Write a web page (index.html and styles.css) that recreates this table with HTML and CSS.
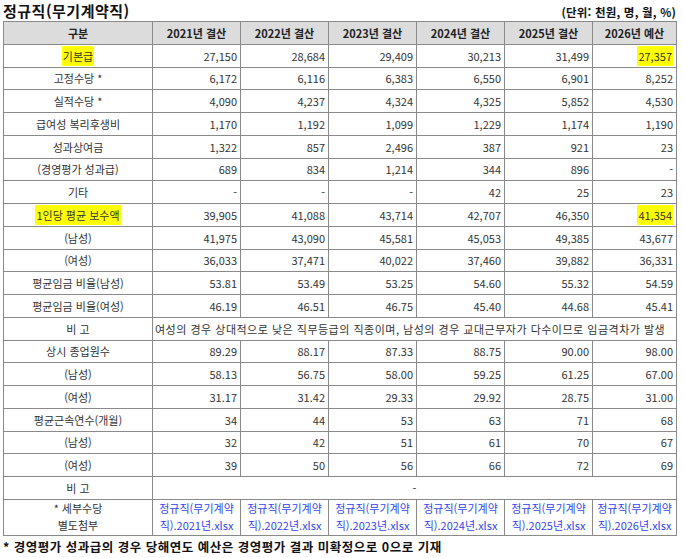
FILE: index.html
```html
<!DOCTYPE html>
<html lang="ko">
<head>
<meta charset="utf-8">
<title>정규직(무기계약직)</title>
<link rel="stylesheet" href="styles.css">
</head>
<body>
<div class="page">
  <div class="top">
    <h1 class="title">정규직(무기계약직)</h1>
    <div class="unit">(단위: 천원, 명, 월, %)</div>
  </div>
  <table class="grid">
    <colgroup>
      <col class="c-label"><col class="c-y"><col class="c-y"><col class="c-y"><col class="c-y"><col class="c-y"><col class="c-last">
    </colgroup>
    <thead>
      <tr><th>구분</th><th>2021년 결산</th><th>2022년 결산</th><th>2023년 결산</th><th>2024년 결산</th><th>2025년 결산</th><th>2026년 예산</th></tr>
    </thead>
    <tbody>
      <tr><td class="lbl"><span class="hl">기본급</span></td><td>27,150</td><td>28,684</td><td>29,409</td><td>30,213</td><td>31,499</td><td><span class="hl">27,357</span></td></tr>
      <tr><td class="lbl">고정수당 *</td><td>6,172</td><td>6,116</td><td>6,383</td><td>6,550</td><td>6,901</td><td>8,252</td></tr>
      <tr><td class="lbl">실적수당 *</td><td>4,090</td><td>4,237</td><td>4,324</td><td>4,325</td><td>5,852</td><td>4,530</td></tr>
      <tr><td class="lbl">급여성 복리후생비</td><td>1,170</td><td>1,192</td><td>1,099</td><td>1,229</td><td>1,174</td><td>1,190</td></tr>
      <tr><td class="lbl">성과상여금</td><td>1,322</td><td>857</td><td>2,496</td><td>387</td><td>921</td><td>23</td></tr>
      <tr><td class="lbl">(경영평가 성과급)</td><td>689</td><td>834</td><td>1,214</td><td>344</td><td>896</td><td>-</td></tr>
      <tr><td class="lbl">기타</td><td>-</td><td>-</td><td>-</td><td>42</td><td>25</td><td>23</td></tr>
      <tr><td class="lbl"><span class="hl">1인당 평균 보수액</span></td><td>39,905</td><td>41,088</td><td>43,714</td><td>42,707</td><td>46,350</td><td><span class="hl">41,354</span></td></tr>
      <tr><td class="lbl">(남성)</td><td>41,975</td><td>43,090</td><td>45,581</td><td>45,053</td><td>49,385</td><td>43,677</td></tr>
      <tr><td class="lbl">(여성)</td><td>36,033</td><td>37,471</td><td>40,022</td><td>37,460</td><td>39,882</td><td>36,331</td></tr>
      <tr><td class="lbl">평균임금 비율(남성)</td><td>53.81</td><td>53.49</td><td>53.25</td><td>54.60</td><td>55.32</td><td>54.59</td></tr>
      <tr><td class="lbl">평균임금 비율(여성)</td><td>46.19</td><td>46.51</td><td>46.75</td><td>45.40</td><td>44.68</td><td>45.41</td></tr>
      <tr><td class="lbl">비 고</td><td class="note" colspan="6">여성의 경우 상대적으로 낮은 직무등급의 직종이며, 남성의 경우 교대근무자가 다수이므로 임금격차가 발생</td></tr>
      <tr><td class="lbl">상시 종업원수</td><td>89.29</td><td>88.17</td><td>87.33</td><td>88.75</td><td>90.00</td><td>98.00</td></tr>
      <tr><td class="lbl">(남성)</td><td>58.13</td><td>56.75</td><td>58.00</td><td>59.25</td><td>61.25</td><td>67.00</td></tr>
      <tr><td class="lbl">(여성)</td><td>31.17</td><td>31.42</td><td>29.33</td><td>29.92</td><td>28.75</td><td>31.00</td></tr>
      <tr><td class="lbl">평균근속연수(개월)</td><td>34</td><td>44</td><td>53</td><td>63</td><td>71</td><td>68</td></tr>
      <tr><td class="lbl">(남성)</td><td>32</td><td>42</td><td>51</td><td>61</td><td>70</td><td>67</td></tr>
      <tr><td class="lbl">(여성)</td><td>39</td><td>50</td><td>56</td><td>66</td><td>72</td><td>69</td></tr>
      <tr><td class="lbl">비 고</td><td class="center" colspan="6">-</td></tr>
      <tr class="files"><td class="lbl">* 세부수당<br>별도첨부</td>
        <td class="file"><a href="#">정규직(무기계약직).2021년.xlsx</a></td>
        <td class="file"><a href="#">정규직(무기계약직).2022년.xlsx</a></td>
        <td class="file"><a href="#">정규직(무기계약직).2023년.xlsx</a></td>
        <td class="file"><a href="#">정규직(무기계약직).2024년.xlsx</a></td>
        <td class="file"><a href="#">정규직(무기계약직).2025년.xlsx</a></td>
        <td class="file"><a href="#">정규직(무기계약직).2026년.xlsx</a></td>
      </tr>
    </tbody>
  </table>
  <p class="foot">* 경영평가 성과급의 경우 당해연도 예산은 경영평가 결과 미확정으로 0으로 기재</p>
</div>
</body>
</html>
```

FILE: styles.css
```css
html, body {
  margin: 0;
  padding: 0;
  background: #ffffff;
}
body {
  font-family: "Noto Sans CJK KR", "Noto Sans", sans-serif;
  color: #222222;
}
.page {
  padding: 0 7px 0 3px;
}
.top {
  display: flex;
  justify-content: space-between;
  align-items: flex-end;
  height: 21px;
}
.title {
  margin: 0;
  font-size: 15px;
  line-height: 20px;
  font-weight: bold;
  letter-spacing: 0.5px;
  color: #111111;
}
.unit {
  font-size: 11.5px;
  font-weight: bold;
  line-height: 18px;
  letter-spacing: 0.2px;
  color: #111111;
}
.grid {
  width: 673px;
  border-collapse: collapse;
  table-layout: fixed;
  border: 1.5px solid #111111;
  font-size: 11px;
}
.c-label { width: 149px; }
.c-y { width: 88px; }
.c-last { width: 84px; }
.grid th, .grid td {
  border: 1px solid #8a8a8a;
  height: 21.75px;
  padding: 0 3px;
  line-height: 14px;
  white-space: nowrap;
  overflow: hidden;
}
.grid th {
  background: #dcdcdc;
  font-weight: bold;
  text-align: center;
  color: #222222;
}
.grid td {
  text-align: right;
  color: #333333;
}
.grid td.lbl, .grid td.center {
  text-align: center;
}
.grid td.note {
  text-align: left;
  padding-left: 2px;
  letter-spacing: 0.5px;
}
.hl {
  background: #ffff00;
  padding: 2px 1px;
}
.files td {
  height: 35px;
  line-height: 17px;
  white-space: normal;
}
.grid td.file {
  text-align: center;
  word-break: break-all;
  padding: 0 4px;
}
.file a {
  color: #3344ee;
  text-decoration: none;
}
.foot {
  margin: 3px 0 0;
  font-size: 12.5px;
  font-weight: bold;
  line-height: 16px;
  letter-spacing: 0.5px;
  color: #111111;
}
```
